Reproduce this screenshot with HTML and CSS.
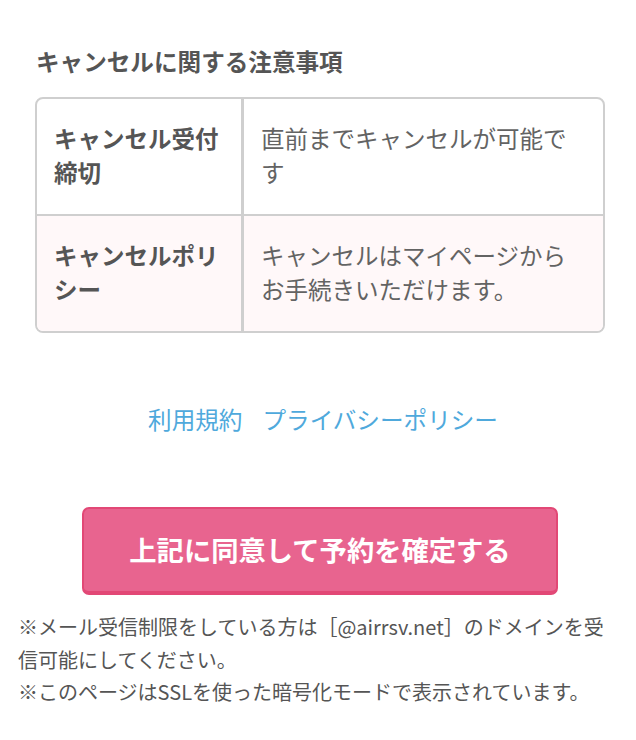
FILE: index.html
```html
<!DOCTYPE html>
<html lang="ja">
<head>
<meta charset="utf-8">
<link rel="stylesheet" href="styles.css">
</head>
<body>
<div class="page">
  <section class="cancel">
    <h2 class="cancel-title">キャンセルに関する注意事項</h2>
    <div class="info-table">
      <div class="row">
        <div class="cell head">キャンセル受付締切</div>
        <div class="cell body">直前までキャンセルが可能です</div>
      </div>
      <div class="row alt">
        <div class="cell head">キャンセルポリシー</div>
        <div class="cell body">キャンセルはマイページからお手続きいただけます。</div>
      </div>
    </div>
  </section>
  <nav class="links">
    <a href="#">利用規約</a>
    <a href="#">プライバシーポリシー</a>
  </nav>
  <div class="actions">
    <button class="confirm" type="button">上記に同意して予約を確定する</button>
  </div>
  <div class="notes">
    <p>※メール受信制限をしている方は［@airrsv.net］のドメインを受信可能にしてください。</p>
    <p>※このページはSSLを使った暗号化モードで表示されています。</p>
  </div>
</div>
</body>
</html>
```
FILE: styles.css
```css
html, body {
  margin: 0;
  padding: 0;
  background: #fff;
}
body {
  font-family: "Noto Sans CJK JP", "Noto Sans", sans-serif;
  color: #555;
}
.page {
  width: 636px;
}
.cancel {
  padding: 44px 31px 0 35px;
}
.cancel-title {
  margin: 0 0 19px 1px;
  font-size: 23.6px;
  line-height: 34px;
  font-weight: 700;
  color: #555;
}
.info-table {
  border: 2px solid #cfcfcf;
  border-radius: 8px;
  overflow: hidden;
}
.row {
  display: grid;
  grid-template-columns: 207px 1fr;
}
.row + .row {
  border-top: 2px solid #cfcfcf;
}
.row.alt {
  background: #fff8f9;
}
.cell {
  padding: 22px 20px 25px 17px;
  font-size: 23.5px;
  line-height: 34px;
}
.cell.head {
  font-weight: 700;
  color: #555;
  border-right: 3px solid #cfcfcf;
}
.cell.body {
  padding-left: 17px;
  padding-right: 32px;
  color: #636363;
}
.links {
  margin-top: 69px;
  display: flex;
  justify-content: center;
  gap: 20px;
  font-size: 23.6px;
  line-height: 34px;
  padding-left: 10px;
}
.links a {
  color: #4fa9dc;
  text-decoration: none;
}
.actions {
  margin-top: 71px;
  padding-left: 82px;
}
.confirm {
  display: block;
  width: 476px;
  height: 88px;
  padding: 0;
  background: #e8648f;
  border: 2px solid #e24876;
  border-bottom-width: 4px;
  border-radius: 7px;
  color: #fff;
  font-family: "Noto Sans CJK JP", "Noto Sans", sans-serif;
  font-size: 27.3px;
  font-weight: 700;
  line-height: 1;
}
.notes {
  margin-top: 16px;
  padding: 0 14px 0 18px;
  font-size: 20px;
  line-height: 32.5px;
  color: #555;
}
.notes p {
  margin: 0;
}
```
